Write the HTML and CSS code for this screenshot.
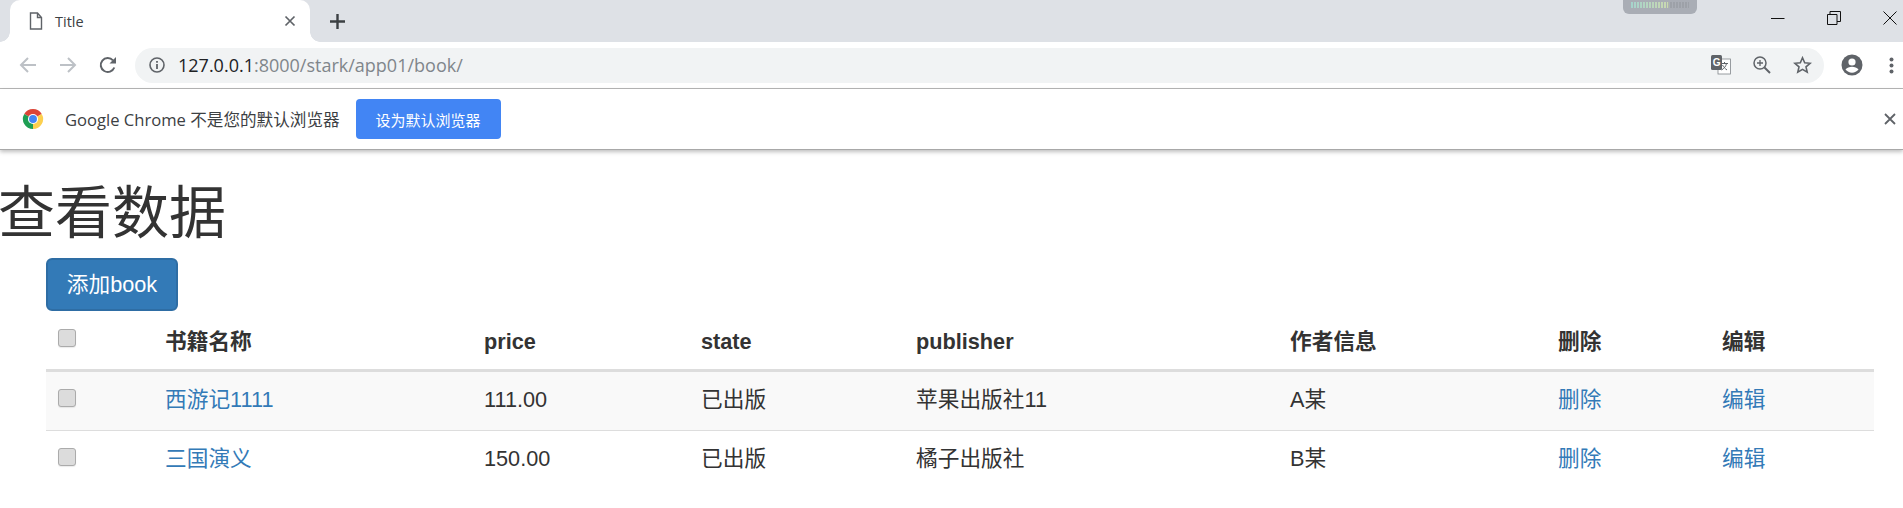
FILE: index.html
```html
<!DOCTYPE html>
<html lang="zh-CN">
<head>
  <meta charset="UTF-8" />
  <title>Title</title>
  <link rel="stylesheet" href="styles.css">
</head>
<body>

  <div class="tabstrip">
    <div class="tab">
      <svg class="tab-icon" width="14" height="18" viewBox="0 0 14 18"><path d="M1.5 1h7l4 4.5V17h-11z M8.5 1v4.5h4" fill="none" stroke="#5f6368" stroke-width="1.4"/></svg>
      <span class="tab-title">Title</span>
      <svg class="tab-close" width="12" height="12" viewBox="0 0 12 12"><path d="M1.5 1.5l9 9M10.5 1.5l-9 9" stroke="#5f6368" stroke-width="1.7"/></svg>
    </div>
    <svg class="new-tab" width="15" height="15" viewBox="0 0 15 15"><path d="M7.5 0v15M0 7.5h15" stroke="#3c4043" stroke-width="2.4"/></svg>
    <div class="meter"><div class="meter-bar"></div></div>
    <div class="window-controls">
      <svg width="14" height="14" viewBox="0 0 14 14"><path d="M0 7.5h13.5" stroke="#111" stroke-width="1"/></svg>
      <svg width="14" height="14" viewBox="0 0 14 14"><path d="M.5 3.5h9.5v10H.5z M3 3.500V.5h10.500v10H10" fill="none" stroke="#111" stroke-width="1"/></svg>
      <svg width="14" height="14" viewBox="0 0 14 14"><path d="M.5.5l13 13M13.500.5l-13 13" stroke="#111" stroke-width="1"/></svg>
    </div>
  </div>

  <div class="toolbar">
    <svg class="nav-icon" width="18" height="18" viewBox="0 0 18 18"><path d="M17 9H2M9 2L2 9l7 7" fill="none" stroke="#bdc1c6" stroke-width="2"/></svg>
    <svg class="nav-icon" width="18" height="18" viewBox="0 0 18 18"><path d="M1 9h15M9 2l7 7-7 7" fill="none" stroke="#bdc1c6" stroke-width="2"/></svg>
    <svg class="nav-icon" width="18" height="18" viewBox="0 0 18 18"><path d="M15.300 11.500A7 7 0 1 1 14 4.300" fill="none" stroke="#5f6368" stroke-width="2"/><path d="M17 1v6.500h-6.500z" fill="#5f6368"/></svg>
    <div class="omnibox">
      <svg class="info-icon" width="16" height="16" viewBox="0 0 16 16"><circle cx="8" cy="8" r="7" fill="none" stroke="#5f6368" stroke-width="1.6"/><path d="M8 7v5M8 4v1.800" stroke="#5f6368" stroke-width="1.800"/></svg>
      <span class="url"><span class="url-host">127.0.0.1</span>:8000/stark/app01/book/</span>
      <div class="omnibox-actions">
        <svg width="20" height="20" viewBox="0 0 20 20"><rect x="7" y="4" width="12.500" height="15" fill="#fff" stroke="#80868b" stroke-width=".8"/><rect x="0" y="0" width="11" height="15" rx="1.500" fill="#5f6368"/><text x="1.800" y="11" class="translate-g">G</text><path d="M10 8.500h7M13.500 7v2M15.500 8.500c-.6 3-2.500 5-5 6.500M11.500 10c1 2 2.500 3.500 4.500 5" fill="none" stroke="#5f6368" stroke-width="1"/></svg>
        <svg width="18" height="18" viewBox="0 0 18 18"><circle cx="7" cy="7" r="6" fill="none" stroke="#5f6368" stroke-width="1.500"/><path d="M11.500 11.500l5.500 5.500" stroke="#5f6368" stroke-width="2"/><path d="M4 7h6M7 4v6" stroke="#5f6368" stroke-width="1.300"/></svg>
        <svg width="19" height="18" viewBox="0 0 19 18"><path d="M9.500 1.800l2.200 5 5.400.5-4.100 3.600 1.200 5.300-4.700-2.800-4.700 2.800 1.200-5.300L1.900 7.300l5.400-.5z" fill="none" stroke="#5f6368" stroke-width="1.600"/></svg>
      </div>
    </div>
    <svg class="profile" width="22" height="22" viewBox="0 0 22 22"><circle cx="11" cy="11" r="10.500" fill="#5f6368"/><circle cx="11" cy="8" r="3.600" fill="#fff"/><path d="M4.500 15.500c1.500-2 4-2.800 6.500-2.800s5 .8 6.500 2.800c-1.500 2-4 3.200-6.500 3.200s-5-1.200-6.500-3.200z" fill="#fff"/></svg>
    <svg class="menu-dots" width="5" height="17" viewBox="0 0 5 17"><circle cx="2.500" cy="2.500" r="2" fill="#5f6368"/><circle cx="2.500" cy="8.500" r="2" fill="#5f6368"/><circle cx="2.500" cy="14.500" r="2" fill="#5f6368"/></svg>
  </div>

  <div class="infobar">
    <svg class="chrome-logo" width="22" height="22" viewBox="0 0 24 24">
      <path d="M12 12L2.470 6.500A11 11 0 0 1 21.530 6.500z" fill="#db4437"/>
      <path d="M12 12L21.530 6.500A11 11 0 0 1 12 23z" fill="#fcd04f"/>
      <path d="M12 12V23A11 11 0 0 1 2.470 6.500z" fill="#1e9e53"/>
      <circle cx="12" cy="12" r="5.500" fill="#fff"/>
      <circle cx="12" cy="12" r="4.300" fill="#4285f4"/>
    </svg>
    <span class="infobar-text">Google Chrome 不是您的默认浏览器</span>
    <button class="default-btn" type="button">设为默认浏览器</button>
    <svg class="infobar-close" width="12" height="12" viewBox="0 0 12 12"><path d="M1 1l10 10M11 1L1 11" stroke="#5f6368" stroke-width="1.800"/></svg>
  </div>

  <div class="page">
    <h1>查看数据</h1>
    <div class="content">
      <a class="btn-add" href="#">添加book</a>
      <table class="data-table">
        <colgroup>
          <col class="col-check">
          <col class="col-name">
          <col class="col-price">
          <col class="col-state">
          <col class="col-publisher">
          <col class="col-author">
          <col class="col-del">
          <col class="col-edit">
        </colgroup>
        <thead>
          <tr>
            <th><input type="checkbox"></th>
            <th>书籍名称</th>
            <th>price</th>
            <th>state</th>
            <th>publisher</th>
            <th>作者信息</th>
            <th>删除</th>
            <th>编辑</th>
          </tr>
        </thead>
        <tbody>
          <tr class="odd">
            <td><input type="checkbox"></td>
            <td><a href="#">西游记1111</a></td>
            <td>111.00</td>
            <td>已出版</td>
            <td>苹果出版社11</td>
            <td>A某</td>
            <td><a href="#">删除</a></td>
            <td><a href="#">编辑</a></td>
          </tr>
          <tr>
            <td><input type="checkbox"></td>
            <td><a href="#">三国演义</a></td>
            <td>150.00</td>
            <td>已出版</td>
            <td>橘子出版社</td>
            <td>B某</td>
            <td><a href="#">删除</a></td>
            <td><a href="#">编辑</a></td>
          </tr>
        </tbody>
      </table>
    </div>
  </div>

</body>
</html>
```

FILE: styles.css
```css
* {
  box-sizing: border-box;
  margin: 0;
  padding: 0;
}

html, body {
  height: 508px;
  overflow: hidden;
}

body {
  background: #fff;
  color: #333;
  font-family: "Liberation Sans", "Noto Sans CJK SC", sans-serif;
  font-size: 21.7px;
  line-height: 31px;
}

svg {
  display: block;
  flex: none;
}

/* browser chrome */
.tabstrip {
  position: relative;
  display: flex;
  align-items: center;
  height: 42px;
  padding-left: 10px;
  background: #dee1e6;
}

.tab {
  position: relative;
  display: flex;
  align-items: center;
  width: 300px;
  height: 42px;
  padding: 0 14px 0 19px;
  background: #fff;
  border-radius: 10px 10px 0 0;
}

.tab::before,
.tab::after {
  content: "";
  position: absolute;
  bottom: 0;
  width: 10px;
  height: 10px;
}

.tab::before {
  left: -10px;
  background: radial-gradient(circle at 0 0, #dee1e6 9.5px, #fff 10px);
}

.tab::after {
  right: -10px;
  background: radial-gradient(circle at 100% 0, #dee1e6 9.5px, #fff 10px);
}

.tab-title {
  flex: 1;
  margin-left: 12px;
  font-family: "Open Sans", "Noto Sans", sans-serif;
  font-size: 14.5px;
  color: #3c4043;
}

.new-tab {
  margin-left: 20px;
}

.meter {
  position: absolute;
  top: 0;
  left: 1623px;
  width: 74px;
  height: 14px;
  padding: 2px 8px;
  background: #a9adb5;
  border-radius: 0 0 6px 6px;
}

.meter-bar {
  height: 6px;
  background:
    repeating-linear-gradient(90deg, transparent 0 2px, #a9adb5 2px 3px),
    linear-gradient(90deg, #a5d3cc 0, #c9d8b0 64%, #9da1a8 65%);
}

.window-controls {
  display: flex;
  gap: 42px;
  margin-left: auto;
  margin-right: 6px;
  transform: translateY(-3px);
}

.toolbar {
  display: flex;
  align-items: center;
  height: 47px;
  padding: 0 9px 0 19px;
  background: #fff;
  border-bottom: 1px solid #b7b7b7;
}

.nav-icon {
  margin-right: 22px;
}

.omnibox {
  display: flex;
  align-items: center;
  flex: 1;
  height: 35px;
  margin-left: -4px;
  padding: 0 12px 0 14px;
  background: #f1f3f4;
  border-radius: 18px;
}

.url {
  margin-left: 13px;
  font-family: "Open Sans", "Noto Sans", sans-serif;
  font-size: 18px;
  color: #80868b;
}

.url-host {
  color: #202124;
}

.omnibox-actions {
  display: flex;
  align-items: center;
  gap: 22px;
  margin-left: auto;
}

.translate-g {
  font-family: "Liberation Sans", sans-serif;
  font-size: 10px;
  font-weight: bold;
  fill: #fff;
}

.profile {
  margin-left: 17px;
}

.menu-dots {
  margin-left: 26px;
}

.infobar {
  display: flex;
  align-items: center;
  height: 61px;
  padding: 0 7px 0 22px;
  background: #fff;
  border-bottom: 1px solid #a8a8a8;
  box-shadow: 0 2px 4px rgba(0, 0, 0, 0.25);
}

.infobar-text {
  margin-left: 21px;
  font-family: "Open Sans", "Noto Sans CJK SC", sans-serif;
  font-size: 16.6px;
  color: #3c4043;
}

.default-btn {
  width: 145px;
  height: 40px;
  margin-left: 16px;
  background: #4285f4;
  color: #fff;
  border: none;
  border-radius: 4px;
  font-family: "Noto Sans CJK SC", sans-serif;
  font-size: 15px;
}

.infobar-close {
  margin-left: auto;
}

/* page */
h1 {
  margin: 32px 0 14px -2px;
  font-size: 57px;
  font-weight: 400;
  line-height: 62px;
}

.content {
  padding: 0 29px 0 46px;
}

.btn-add {
  display: inline-block;
  width: 132px;
  height: 53px;
  padding: 9px 0;
  background: #337ab7;
  border: 2px solid #2e6da4;
  border-radius: 6px;
  color: #fff;
  text-align: center;
  text-decoration: none;
  vertical-align: top;
}

.data-table {
  width: 100%;
  table-layout: fixed;
  border-collapse: collapse;
}

.col-check { width: 107px; }
.col-name { width: 319px; }
.col-price { width: 217px; }
.col-state { width: 215px; }
.col-publisher { width: 374px; }
.col-author { width: 268px; }
.col-del { width: 164px; }
.col-edit { width: 164px; }

th,
td {
  padding: 12px 12px 14px;
  text-align: left;
  vertical-align: top;
}

th {
  padding-top: 15px;
  padding-bottom: 12px;
  border-bottom: 3px solid #ddd;
  font-weight: bold;
}

tbody tr + tr td {
  border-top: 1px solid #ddd;
}

.odd td {
  background: #f9f9f9;
  padding-bottom: 15px;
}

td a {
  color: #337ab7;
  text-decoration: none;
}

input[type="checkbox"] {
  display: block;
  width: 18px;
  height: 18px;
  margin-top: 5px;
  appearance: none;
  background: #dcdcdc;
  border: 1.5px solid #ababab;
  border-radius: 3px;
  box-shadow: 0 1px 1px rgba(0, 0, 0, 0.08);
}

th input[type="checkbox"] {
  margin-top: 3px;
}
```
